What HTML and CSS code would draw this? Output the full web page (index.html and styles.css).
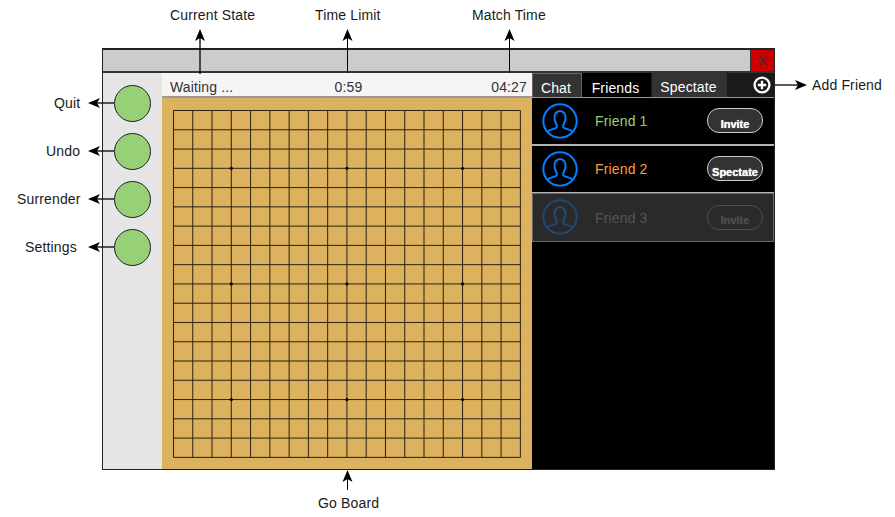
FILE: index.html
```html
<!DOCTYPE html>
<html lang="en">

<head>
  <meta charset="UTF-8">
  <title>Go client mockup</title>
  <link rel="stylesheet" href="styles.css">
</head>

<body>
  <div class="window">
    <div class="titlebar">
      <button class="close">X</button>
    </div>
    <div class="content">
      <nav class="tools">
        <button class="tool"></button>
        <button class="tool"></button>
        <button class="tool"></button>
        <button class="tool"></button>
      </nav>

      <main class="game">
        <div class="status">
          <span class="status-state">Waiting ...</span>
          <span class="status-limit">0:59</span>
          <span class="status-match">04:27</span>
        </div>
        <div class="board">
          <svg class="grid" width="349" height="349" viewBox="0 0 349 349">
            <path fill="none" stroke="#2b2110" stroke-width="1" d="M.5 .5V347.4M19.77 .5V347.4M39.04 .5V347.4M58.31 .5V347.4M77.58 .5V347.4M96.85 .5V347.4M116.12 .5V347.4M135.39 .5V347.4M154.66 .5V347.4M173.93 .5V347.4M193.2 .5V347.4M212.47 .5V347.4M231.74 .5V347.4M251.01 .5V347.4M270.28 .5V347.4M289.55 .5V347.4M308.82 .5V347.4M328.09 .5V347.4M347.36 .5V347.4" />
            <path fill="none" stroke="#2b2110" stroke-width="1" d="M.5 .5H347.4M.5 19.77H347.4M.5 39.04H347.4M.5 58.31H347.4M.5 77.58H347.4M.5 96.85H347.4M.5 116.12H347.4M.5 135.39H347.4M.5 154.66H347.4M.5 173.93H347.4M.5 193.2H347.4M.5 212.47H347.4M.5 231.74H347.4M.5 251.01H347.4M.5 270.28H347.4M.5 289.55H347.4M.5 308.82H347.4M.5 328.09H347.4M.5 347.36H347.4" />
            <g fill="#000">
              <circle cx="58.31" cy="58.31" r="1.6" />
              <circle cx="173.93" cy="58.31" r="1.6" />
              <circle cx="289.55" cy="58.31" r="1.6" />
              <circle cx="58.31" cy="173.93" r="1.6" />
              <circle cx="173.93" cy="173.93" r="1.6" />
              <circle cx="289.55" cy="173.93" r="1.6" />
              <circle cx="58.31" cy="289.55" r="1.6" />
              <circle cx="173.93" cy="289.55" r="1.6" />
              <circle cx="289.55" cy="289.55" r="1.6" />
            </g>
          </svg>
        </div>
      </main>

      <aside class="side">
        <div class="tabs">
          <span class="tab tab-chat">Chat</span>
          <span class="tab tab-friends">Friends</span>
          <span class="tab tab-spectate">Spectate</span>
          <svg class="add" width="18" height="18" viewBox="0 0 18 18">
            <circle cx="9" cy="9" r="7.4" fill="none" stroke="#fff" stroke-width="2.4" />
            <path d="M9 4.800V13.200M4.800 9H13.200" stroke="#fff" stroke-width="2.400" />
          </svg>
        </div>
        <div class="friend">
          <svg class="avatar" width="38" height="38" viewBox="0 0 38 38">
            <use href="#person" />
          </svg>
          <span class="friend-name name-online">Friend 1</span>
          <button class="pill">Invite</button>
        </div>
        <div class="friend">
          <svg class="avatar" width="38" height="38" viewBox="0 0 38 38">
            <use href="#person" />
          </svg>
          <span class="friend-name name-playing">Friend 2</span>
          <button class="pill">Spectate</button>
        </div>
        <div class="friend friend-off">
          <svg class="avatar" width="38" height="38" viewBox="0 0 38 38">
            <use href="#person" />
          </svg>
          <span class="friend-name">Friend 3</span>
          <button class="pill">Invite</button>
        </div>
      </aside>
    </div>
  </div>

  <svg class="hidden" width="0" height="0">
    <symbol id="person" viewBox="0 0 38 38">
      <g fill="none" stroke="currentColor" stroke-width="2">
        <circle cx="19" cy="19" r="16.700" />
        <path d="M5.500 30C9 26.500 15.500 27.500 16 24.500C16.200 23 14 20.500 13.500 17C13 12 15.500 9 19 9C22.500 9 25 12 24.500 17C24 20.500 21.800 23 22 24.500C22.500 27.500 29 26.500 32.500 30" />
      </g>
    </symbol>
  </svg>

  <!-- callouts -->
  <svg class="arrows" width="895" height="517" viewBox="0 0 895 517">
    <g stroke="#000" stroke-width="1" fill="none">
      <path stroke-width="1.300" d="M200 74V36" />
      <path d="M347.500 73V36" />
      <path d="M509.500 73V36" />
      <path d="M347.500 490V476" />
      <path stroke-width="1.300" d="M114 103H94" />
      <path stroke-width="1.300" d="M114 151H94" />
      <path stroke-width="1.300" d="M114 199H94" />
      <path stroke-width="1.300" d="M114 247H94" />
      <path stroke-width="1.300" d="M775 85H800" />
    </g>
    <g fill="#000">
      <path d="M200 29L205 41L200 38L195 41Z" />
      <path d="M347.500 29L352.500 41L347.500 38L342.500 41Z" />
      <path d="M509.500 29L514.500 41L509.500 38L504.500 41Z" />
      <path d="M347.500 470L352.500 482L347.500 479L342.500 482Z" />
      <path d="M88 103L100 98L97 103L100 108Z" />
      <path d="M88 151L100 146L97 151L100 156Z" />
      <path d="M88 199L100 194L97 199L100 204Z" />
      <path d="M88 247L100 242L97 247L100 252Z" />
      <path d="M807 85L795 80L798 85L795 90Z" />
    </g>
  </svg>

  <span class="note note-state">Current State</span>
  <span class="note note-limit">Time Limit</span>
  <span class="note note-match">Match Time</span>
  <span class="note note-board">Go Board</span>
  <span class="note note-quit">Quit</span>
  <span class="note note-undo">Undo</span>
  <span class="note note-surrender">Surrender</span>
  <span class="note note-settings">Settings</span>
  <span class="note note-add">Add Friend</span>
</body>

</html>
```

FILE: styles.css
```css
:root {
  --ink: #1a1a1a;
  --line: #333;
  --panel: #e6e6e6;
  --wood: #dcb25e;
  --blue: #007fff;
}

html,
body {
  margin: 0;
  height: 517px;
  overflow: hidden;
}

body {
  position: relative;
  background: #fff;
  color: var(--ink);
  font-family: "Liberation Sans", Arial, sans-serif;
  font-size: 14px;
  letter-spacing: .15px;
}

button {
  font-family: inherit;
  cursor: pointer;
}

.hidden {
  position: absolute;
}

.window {
  box-sizing: border-box;
  width: 673px;
  height: 422px;
  margin: 48px 0 0 102px;
  border: 1px solid #222;
  border-block-start-width: 2px;
  display: flex;
  flex-direction: column;
}

.titlebar {
  flex: none;
  box-sizing: border-box;
  height: 23px;
  display: flex;
  justify-content: flex-end;
  background: #ccc;
  border-block-end: 2px solid var(--line);
}

.close {
  box-sizing: border-box;
  width: 24px;
  height: 21px;
  padding: 0;
  background: #c00;
  border: none;
  border-inline-start: 1px solid var(--line);
  color: #333;
  font-size: 15px;
}

.content {
  flex: 1;
  min-height: 0;
  display: flex;
}

.tools {
  flex: none;
  box-sizing: border-box;
  width: 59px;
  display: flex;
  flex-direction: column;
  align-items: center;
  gap: 11px;
  padding-block-start: 12px;
  background: var(--panel);
}

.tool {
  box-sizing: border-box;
  width: 37px;
  height: 37px;
  padding: 0;
  background: #97d077;
  border: 1px solid #222;
  border-radius: 50%;
}

.game {
  flex: none;
  width: 370px;
  display: flex;
  flex-direction: column;
}

.status {
  flex: none;
  box-sizing: border-box;
  height: 25px;
  display: grid;
  grid-template-columns: 1fr 1fr 1fr;
  align-items: center;
  padding: 4px 5px 0 8px;
  background: #f5f5f5;
  border-block-end: 2px solid #999;
  color: #333;
}

.status-limit {
  text-align: center;
}

.status-match {
  text-align: right;
}

.board {
  flex: 1;
  padding: 12px 0 0 11px;
  background: var(--wood);
}

.grid {
  display: block;
}

.side {
  flex: 1;
  background: #000;
}

.tabs {
  box-sizing: border-box;
  height: 25px;
  display: flex;
  align-items: stretch;
  background: #1a1a1a;
  border-block-end: 1px solid #999;
  color: #fff;
}

.tab {
  box-sizing: border-box;
  display: flex;
  align-items: center;
  justify-content: center;
  padding-block-start: 4px;
  padding-inline-end: 2px;
}

.tab-chat {
  width: 50px;
  background: #333;
  border: 1px solid #666;
  border-block-end: none;
}

.tab-friends {
  width: 69px;
  background: #000;
  padding-block-start: 6px;
}

.tab-spectate {
  width: 75px;
  margin-inline-start: 1px;
  background: #333;
}

.add {
  margin: 3px 3px 0 auto;
}

.friend {
  box-sizing: border-box;
  height: 48px;
  display: flex;
  align-items: center;
  padding-inline: 9px 11px;
  background: #000;
  border-block-end: 2px solid #b3b3b3;
  color: var(--blue);
}

.friend-off {
  height: 49px;
  margin-block-start: -1px;
  background: #2a2a2a;
  border: 1px solid #666;
  color: #1f4a73;
  padding-inline: 8px 10px;
}

.avatar {
  flex: none;
  margin-block-end: 1px;
}

.friend-name {
  flex: 1;
  margin-inline-start: 16px;
  color: #555;
}

.name-online {
  color: #97d077;
}

.name-playing {
  color: #ff9933;
}

.pill {
  box-sizing: border-box;
  width: 56px;
  height: 25px;
  margin-block-end: 1px;
  padding: 6px 0 0;
  background: #333;
  border: 1px solid #ccc;
  border-radius: 12px;
  color: #fff;
  font-size: 11px;
  font-weight: 700;
  letter-spacing: 0;
  text-shadow: 0 0 1px #fff;
}

.friend-off .pill {
  background: transparent;
  border-color: #4d4d4d;
  color: #4d4d4d;
  text-shadow: 0 0 1px #4d4d4d;
}

.arrows {
  position: absolute;
  top: 0;
  left: 0;
  pointer-events: none;
}

.note {
  position: absolute;
  line-height: 16px;
  white-space: nowrap;
}

.note-state { left: 170px; top: 7px; }
.note-limit { left: 315px; top: 7px; }
.note-match { left: 472px; top: 7px; }
.note-board { left: 318px; top: 495px; }
.note-quit { left: 54px; top: 95px; }
.note-undo { left: 46px; top: 143px; }
.note-surrender { left: 17px; top: 191px; }
.note-settings { left: 25px; top: 239px; }
.note-add { left: 812px; top: 77px; }
```
